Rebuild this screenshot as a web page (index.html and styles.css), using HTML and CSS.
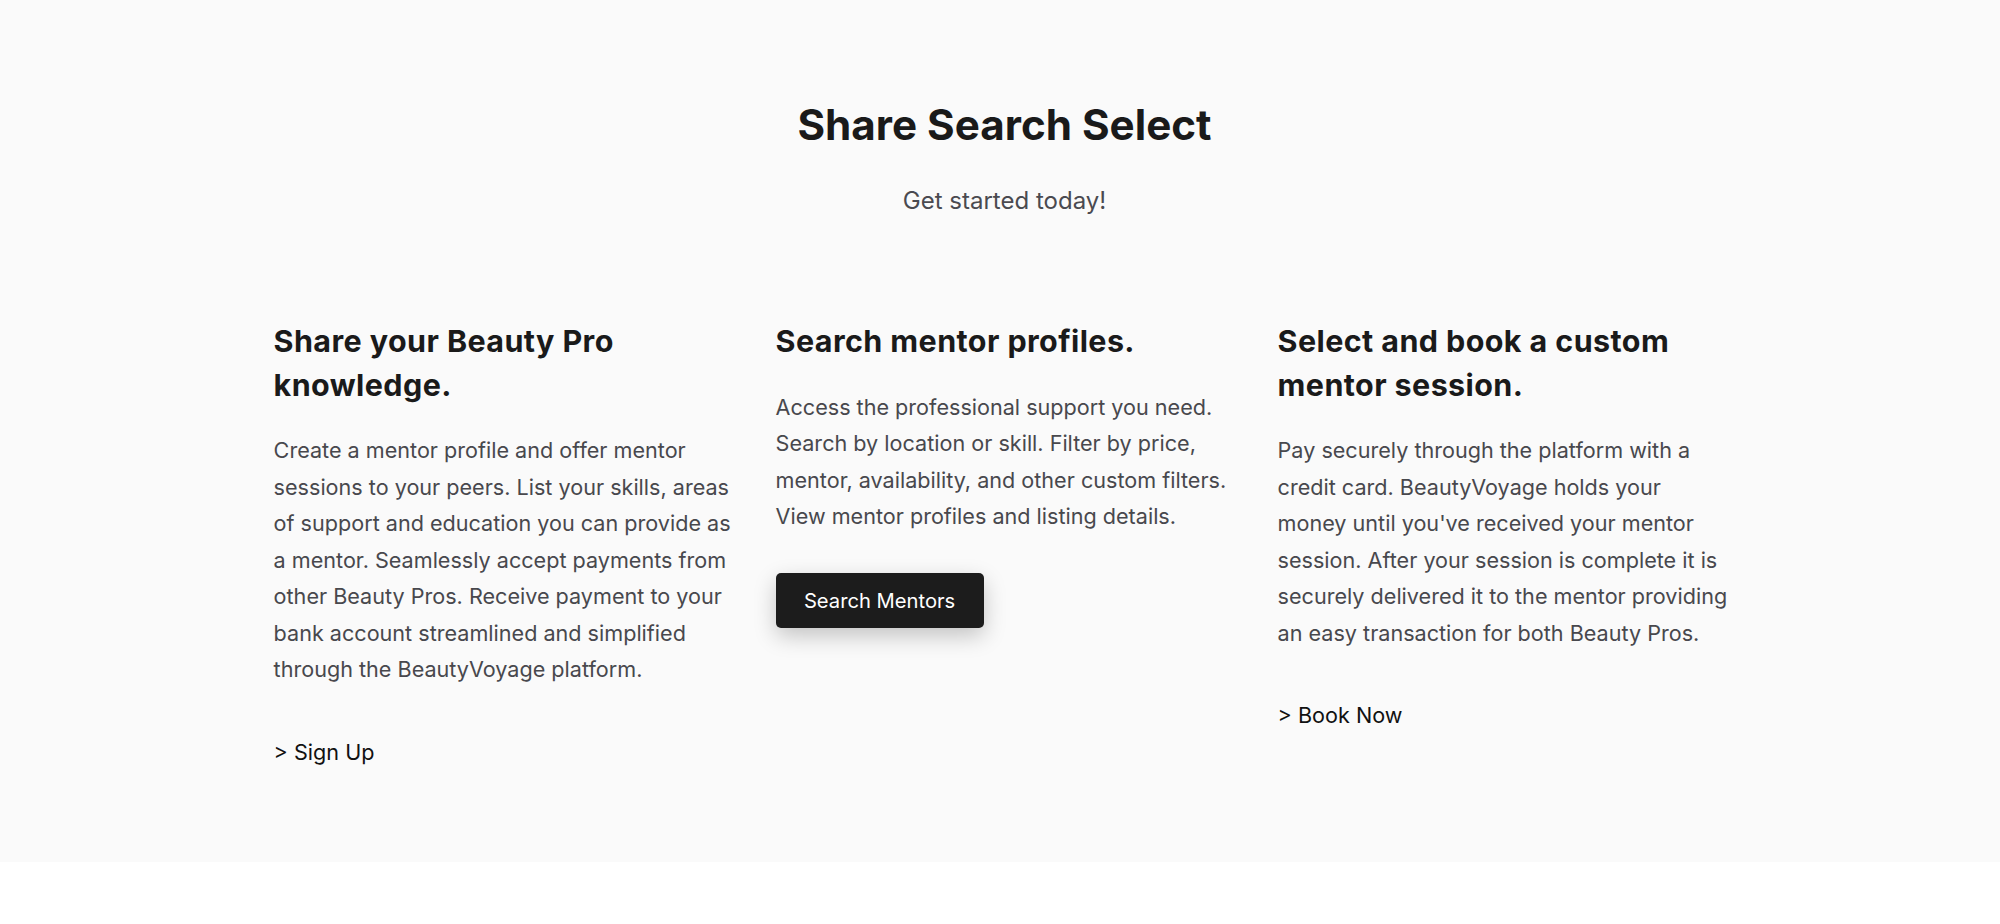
FILE: index.html
```html
<!DOCTYPE html>
<html lang="en">
<head>
<meta charset="utf-8">
<title>Share Search Select</title>
<link rel="stylesheet" href="styles.css">
</head>
<body>
<section class="how">
  <header class="how-head">
    <h1 class="how-title">Share Search Select</h1>
    <p class="how-sub">Get started today!</p>
  </header>
  <div class="steps">
    <article class="step">
      <h2 class="step-title">Share your Beauty Pro knowledge.</h2>
      <p class="step-text">Create a mentor profile and offer mentor sessions to your peers. List your skills, areas of support and education you can provide as a mentor. Seamlessly accept payments from other Beauty Pros. Receive payment to your bank account streamlined and simplified through the BeautyVoyage platform.</p>
      <a class="step-link" href="#">&gt; Sign Up</a>
    </article>
    <article class="step">
      <h2 class="step-title">Search mentor profiles.</h2>
      <p class="step-text">Access the professional support you need. Search by location or skill. Filter by price, mentor, availability, and other custom filters. View mentor profiles and listing details.</p>
      <a class="btn" href="#">Search Mentors</a>
    </article>
    <article class="step">
      <h2 class="step-title">Select and book a custom mentor session.</h2>
      <p class="step-text">Pay securely through the platform with a credit card. BeautyVoyage holds your money until you've received your mentor session. After your session is complete it is securely delivered it to the mentor providing an easy transaction for both Beauty Pros.</p>
      <a class="step-link" href="#">&gt; Book Now</a>
    </article>
  </div>
</section>
</body>
</html>
```

FILE: styles.css
```css
* { box-sizing: border-box; }

html, body {
  margin: 0;
  padding: 0;
  background: #ffffff;
}

body {
  font-family: Inter, "Noto Sans", "Liberation Sans", sans-serif;
  color: #1a1a1a;
}

.how {
  background: #fafafa;
  height: 862px;
  padding-top: 100px;
  padding-left: 9px;
}

.how-head {
  text-align: center;
}

.how-title {
  margin: 0;
  font-size: 42.2px;
  line-height: 50px;
  font-weight: 700;
  color: #1a1a1a;
}

.how-sub {
  margin: 35px 0 0;
  font-size: 24px;
  line-height: 32px;
  color: #4a4a50;
}

.steps {
  display: grid;
  grid-template-columns: repeat(3, 457.8px);
  column-gap: 44.2px;
  justify-content: center;
  margin-top: 102px;
  align-items: start;
}

.step {
  display: flex;
  flex-direction: column;
  align-items: flex-start;
}

.step-title {
  margin: 0;
  font-size: 30.5px;
  line-height: 43.5px;
  font-weight: 700;
  letter-spacing: 0.4px;
  color: #1a1a1a;
}

.step-text {
  margin: 26px 0 0;
  font-size: 21.6px;
  line-height: 36.5px;
  color: #48484d;
}

.step-link {
  margin-top: 46px;
  font-size: 21.6px;
  line-height: 36.5px;
  color: #111111;
  text-decoration: none;
}

.btn {
  margin-top: 38px;
  display: inline-block;
  width: 208px;
  height: 55px;
  line-height: 55px;
  text-align: center;
  background: #1c1c1c;
  color: #ffffff;
  font-size: 20.2px;
  border-radius: 5px;
  text-decoration: none;
  box-shadow: 0 8px 22px rgba(0, 0, 0, 0.22);
}
```
